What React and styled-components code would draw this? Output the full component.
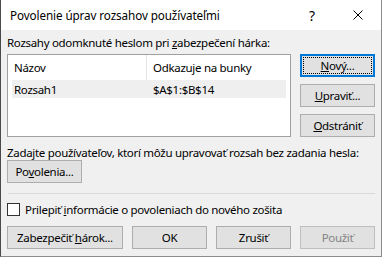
import React from "react";
import styled, { createGlobalStyle } from "styled-components";

const GlobalStyle = createGlobalStyle`
  html, body {
    margin: 0;
    padding: 0;
    background: #f0f0f0;
  }
  * {
    box-sizing: border-box;
  }
`;

const Window = styled.div`
  width: 382px;
  height: 257px;
  display: flex;
  flex-direction: column;
  background: #f0f0f0;
  border: 1px solid #8c8c8c;
  border-left-color: #4a4a4a;
  border-top: none;
  font-family: "Noto Sans", "Open Sans", sans-serif;
  font-size: 11.5px;
  letter-spacing: -0.3px;
  color: #000;
  overflow: hidden;
`;

const TitleBar = styled.div`
  height: 30px;
  flex: none;
  display: flex;
  align-items: center;
  background: #fff;
`;

const Title = styled.div`
  flex: 1;
  padding-left: 9px;
  font-size: 11.7px;
  letter-spacing: -0.1px;
  line-height: 30px;
`;

const TitleButton = styled.div`
  width: 46px;
  height: 30px;
  display: flex;
  align-items: center;
  justify-content: center;
  font-size: 14px;
`;

const Body = styled.div`
  flex: 1;
  display: flex;
  flex-direction: column;
  padding: 5px 6px 0 6px;
`;

const Label = styled.div`
  line-height: 15px;
  margin-top: ${(p) => p.$top || 0}px;
  white-space: nowrap;
`;

const RangeArea = styled.div`
  display: flex;
  gap: 9px;
  margin-top: 4px;
`;

const ListBox = styled.div`
  width: 284px;
  height: 83px;
  background: #fff;
  border: 1px solid #a0a0a0;
  padding: 0 4px;
`;

const ListRow = styled.div`
  display: grid;
  grid-template-columns: 135px 1fr;
  height: ${(p) => (p.$header ? 25 : 18)}px;
  align-items: stretch;
  background: ${(p) => (p.$selected ? "#efefef" : "transparent")};
`;

const Cell = styled.div`
  display: flex;
  align-items: center;
  padding-left: ${(p) => (p.$second ? 6 : 2)}px;
  border-right: ${(p) => (p.$divider ? "1px solid #e5e5e5" : "none")};
  white-space: nowrap;
  overflow: hidden;
`;

const ButtonColumn = styled.div`
  display: flex;
  flex-direction: column;
  gap: 7px;
`;

const Button = styled.div`
  width: ${(p) => (p.$grow ? "auto" : "75px")};
  flex: ${(p) => (p.$grow ? 1 : "none")};
  height: 23px;
  display: flex;
  align-items: center;
  justify-content: center;
  background: #e1e1e1;
  border: ${(p) => (p.$focused ? "2px solid #0078d7" : "1px solid #adadad")};
  border-color: ${(p) => (p.$disabled ? "#bfbfbf" : undefined)};
  color: ${(p) => (p.$disabled ? "#838383" : "#000")};
  white-space: nowrap;
  line-height: 15px;
`;

const FocusRing = styled.span`
  flex: 1;
  align-self: stretch;
  margin: 1px;
  display: flex;
  align-items: center;
  justify-content: center;
  border: 1px dotted #000;
`;

const Separator = styled.div`
  height: 1px;
  background: #d9d9d9;
  margin: 10px 0 0 1px;
`;

const CheckRow = styled.label`
  display: flex;
  align-items: center;
  gap: 5px;
  margin-top: 9px;
  height: 13px;
`;

const CheckBox = styled.span`
  width: 13px;
  height: 13px;
  flex: none;
  background: #fff;
  border: 1px solid #333;
`;

const Footer = styled.div`
  display: flex;
  gap: 9px;
  margin-top: 10px;
`;

const CloseIcon = () => (
  <svg width="10" height="10" viewBox="0 0 10 10">
    <path d="M0.5 0.5 L9.5 9.5 M9.5 0.5 L0.5 9.5" stroke="#000" strokeWidth="1" />
  </svg>
);

export default function App() {
  return (
    <>
      <GlobalStyle />
      <Window>
        <TitleBar>
          <Title>Povolenie úprav rozsahov používateľmi</Title>
          <TitleButton>?</TitleButton>
          <TitleButton>
            <CloseIcon />
          </TitleButton>
        </TitleBar>
        <Body>
          <Label>
            Rozsahy odomknuté heslom pri <u>z</u>abezpečení hárka:
          </Label>
          <RangeArea>
            <ListBox>
              <ListRow $header>
                <Cell $divider>Názov</Cell>
                <Cell $second>Odkazuje na bunky</Cell>
              </ListRow>
              <ListRow $selected>
                <Cell>Rozsah1</Cell>
                <Cell $second>$A$1:$B$14</Cell>
              </ListRow>
            </ListBox>
            <ButtonColumn>
              <Button $focused>
                <FocusRing>
                  <u>N</u>ový...
                </FocusRing>
              </Button>
              <Button>
                <span>
                  <u>U</u>praviť...
                </span>
              </Button>
              <Button>
                <span>
                  <u>O</u>dstrániť
                </span>
              </Button>
            </ButtonColumn>
          </RangeArea>
          <Label $top={8}>
            Zadajte používateľov, ktorí môžu upravovať rozsah bez zadania hesla:
          </Label>
          <Button>
            <span>
              Po<u>v</u>olenia...
            </span>
          </Button>
          <Separator />
          <CheckRow>
            <CheckBox />
            <span>
              Prilepiť <u>i</u>nformácie o povoleniach do nového zošita
            </span>
          </CheckRow>
          <Footer>
            <Button $grow>
              <span>
                Zabezpečiť <u>h</u>árok...
              </span>
            </Button>
            <Button>OK</Button>
            <Button>Zrušiť</Button>
            <Button $disabled>Použiť</Button>
          </Footer>
        </Body>
      </Window>
    </>
  );
}
